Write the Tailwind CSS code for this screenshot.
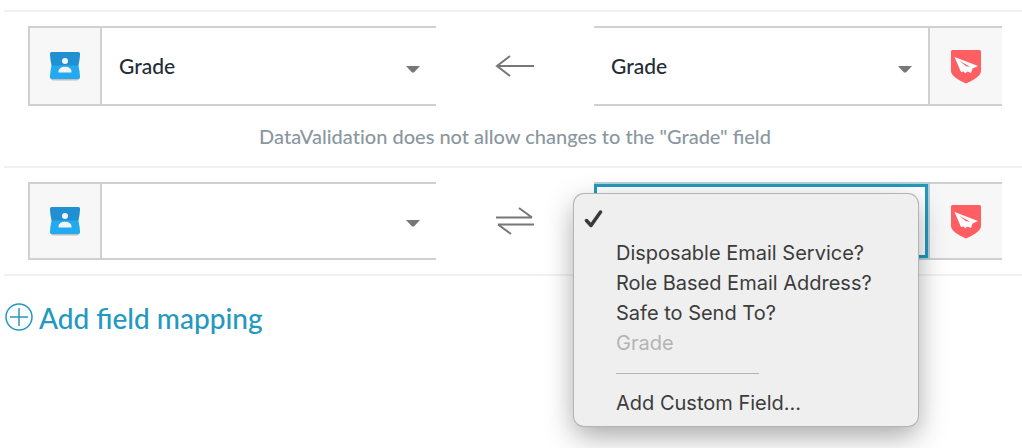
<!DOCTYPE html>
<html lang="en">
<head>
    <meta charset="UTF-8">
    <meta name="viewport" content="width=device-width, initial-scale=1.0">
    <title>Field Mapping</title>
    <script src="https://cdn.jsdelivr.net/npm/@tailwindcss/browser@4"></script>
</head>
<body class="bg-white font-['Lato',sans-serif] font-medium text-[#1f2d36]">
    <!-- Shared icons -->
    <svg class="hidden">
        <symbol id="contacts" viewBox="0 0 32 30">
            <path d="M3 3h26l1 24.500q0 2-2 2H4q-2 0-2-2z" fill="#000" fill-opacity=".22"></path>
            <path d="M2.800 1h26.400q2 0 1.900 2Q30.800 9 29.300 15H2.700Q1.200 9 .9 3q-.1-2 1.900-2z" fill="#2190d3"></path>
            <path d="M2.700 14.500h26.600Q30.800 20 31.100 26q.1 2-1.900 2H2.800q-2 0-1.900-2Q1.200 20 2.700 14.500z" fill="#22a9ef"></path>
            <circle cx="16" cy="10" r="3" fill="#f4f4f4"></circle>
            <path d="M9.500 21.500v-1c0-3 3-4.800 6.500-4.800s6.500 1.800 6.500 4.800v1z" fill="#f4f4f4"></path>
        </symbol>
        <symbol id="shield" viewBox="0 0 32 35">
            <path d="M2.500 1h27q1.500 0 1.500 1.500V22c0 5-8 9.500-15 12.500C9 31.500 1 27 1 22V2.500Q1 1 2.500 1z" fill="#ff5f63"></path>
            <path d="M4.500 8l23.500 9-5.500 2.500-1.500 4.500-3.400-1.600-2.400 1.800-1.800-1.600-2.400.4z" fill="#fff"></path>
            <path d="M9 11.500l11 6.300-4-.6z" fill="#ff5f63"></path>
        </symbol>
        <symbol id="caret" viewBox="0 0 14 7">
            <path d="M0 0h14L8 6.500H6z" fill="#777"></path>
        </symbol>
    </svg>

    <main class="min-h-screen pt-[10px] pl-1">
        <!-- Grade mapping -->
        <section class="border-t-2 border-[#f1f1f1] pt-[14px] pb-4 pl-6 pr-5">
            <div class="grid grid-cols-[1fr_158px_1fr] items-center">
                <div class="flex h-20 border-2 border-r-0 border-[#d0d0d0]">
                    <div class="w-[72px] flex items-center justify-center bg-[#f7f7f7] border-r-2 border-[#d0d0d0]">
                        <svg class="w-8 h-[30px]"><use href="#contacts"></use></svg>
                    </div>
                    <div class="relative flex-1">
                        <select aria-label="Contact field" class="appearance-none w-full h-full px-[17px] text-[21px] bg-white outline-none">
                            <option>Grade</option>
                        </select>
                        <svg class="absolute right-4 top-[38px] w-[14px] h-[7px] pointer-events-none"><use href="#caret"></use></svg>
                    </div>
                </div>
                <div class="flex justify-center">
                    <svg class="w-10 h-8" viewBox="0 0 40 32" fill="none" stroke="#777" stroke-width="2">
                        <path d="M39 16H2M15 6L2 16l13 10"></path>
                    </svg>
                </div>
                <div class="flex h-20 border-y-2 border-[#d0d0d0]">
                    <div class="relative flex-1">
                        <select aria-label="DataValidation field" class="appearance-none w-full h-full px-[17px] text-[21px] bg-white outline-none">
                            <option>Grade</option>
                        </select>
                        <svg class="absolute right-4 top-[38px] w-[14px] h-[7px] pointer-events-none"><use href="#caret"></use></svg>
                    </div>
                    <div class="w-[74px] flex items-center justify-center bg-[#f7f7f7] border-l-2 border-[#d0d0d0]">
                        <svg class="w-8 h-[35px]"><use href="#shield"></use></svg>
                    </div>
                </div>
            </div>
            <p class="pt-4 text-center text-[20px] leading-7 text-[#8b979f]"><span class="[font-variant-ligatures:none]">DataValidation</span> does not allow changes to the "Grade" field</p>
        </section>

        <!-- Empty mapping, right list open -->
        <section class="border-y-2 border-[#f1f1f1] py-[14px] pl-6 pr-5">
            <div class="grid grid-cols-[1fr_158px_1fr] items-center">
                <div class="flex h-[78px] border-2 border-r-0 border-[#d0d0d0]">
                    <div class="w-[72px] flex items-center justify-center bg-[#f7f7f7] border-r-2 border-[#d0d0d0]">
                        <svg class="w-8 h-[30px]"><use href="#contacts"></use></svg>
                    </div>
                    <div class="relative flex-1">
                        <select aria-label="Contact field" class="appearance-none w-full h-full px-[17px] text-[21px] bg-white outline-none">
                            <option></option>
                        </select>
                        <svg class="absolute right-4 top-[36px] w-[14px] h-[7px] pointer-events-none"><use href="#caret"></use></svg>
                    </div>
                </div>
                <div class="flex justify-center">
                    <svg class="w-10 h-8" viewBox="0 0 40 32" fill="none" stroke="#777" stroke-width="2">
                        <path d="M1 12.500H37M24 3l13 9.500M39 19.500H3M16 29L3 19.500"></path>
                    </svg>
                </div>
                <div class="relative flex h-[78px]">
                    <select aria-label="DataValidation field" class="appearance-none flex-1 px-[17px] text-[21px] bg-white outline-none border-y-2 border-r-2 border-[#b5d2db] shadow-[inset_0_0_0_3px_#2499bf]">
                        <option></option>
                        <option>Disposable Email Service?</option>
                        <option>Role Based Email Address?</option>
                        <option>Safe to Send To?</option>
                        <option disabled>Grade</option>
                        <option>Add Custom Field...</option>
                    </select>
                    <div class="w-[72px] flex items-center justify-center bg-[#f7f7f7] border-y-2 border-[#d0d0d0]">
                        <svg class="w-8 h-[35px]"><use href="#shield"></use></svg>
                    </div>

                    <ul role="listbox" aria-label="DataValidation fields" class="absolute -left-5 top-3 w-[344px] py-2 pl-[42px] rounded-[10px] bg-[#efefef] font-['Inter',sans-serif] font-normal text-[20px] leading-[30px] text-[#3c3c3c] whitespace-nowrap shadow-[0_0_0_1px_#b4b4b4,0_10px_28px_rgba(0,0,0,0.35)]">
                        <li role="option" aria-selected="true" aria-label="None" class="h-9 -ml-8 flex items-center">
                            <svg class="w-5 h-5" viewBox="0 0 20 20" fill="none" stroke="#3a3a3a" stroke-width="3.500" stroke-linecap="round" stroke-linejoin="round">
                                <path d="M2.500 10.500L7 15.500 16.500 2"></path>
                            </svg>
                        </li>
                        <li role="option">Disposable Email Service?</li>
                        <li role="option">Role Based Email Address?</li>
                        <li role="option">Safe to Send To?</li>
                        <li role="option" aria-disabled="true" class="text-[#b4b4b4]">Grade</li>
                        <li role="separator" class="h-[30px] w-[143px] flex items-center"><hr class="w-full border-[#b4b4b4]"></li>
                        <li role="option">Add Custom Field...</li>
                    </ul>
                </div>
            </div>
        </section>

        <a href="#" class="inline-flex items-center gap-[5px] pt-6 text-[28px] leading-9 text-[#2499bf]">
            <svg class="w-[30px] h-[30px]" viewBox="0 0 30 30" fill="none" stroke="#2499bf" stroke-width="1.500">
                <circle cx="15" cy="14" r="13"></circle>
                <path d="M6 14h18M15 5v18"></path>
            </svg>
            Add field mapping
        </a>
    </main>
</body>
</html>
